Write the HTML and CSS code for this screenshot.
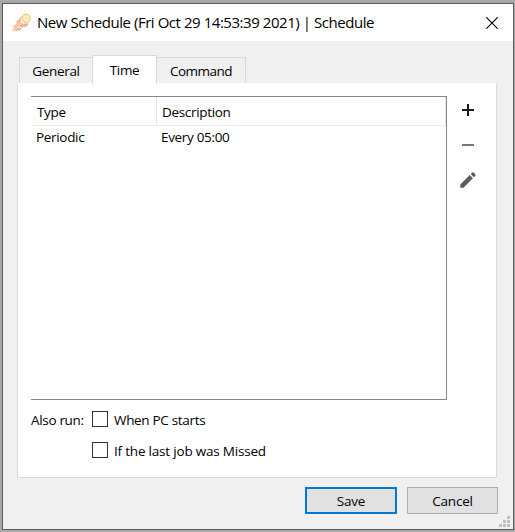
FILE: index.html
```
<!DOCTYPE html>
<html lang="en">
<head>
<meta charset="utf-8">
<title>New Schedule</title>
<link rel="stylesheet" href="styles.css">
</head>
<body>
<div class="window">
  <header class="titlebar">
    <svg class="logo" width="20" height="20" viewBox="0 0 20 20" fill="none">
      <g stroke="#ef9a8c" stroke-width="1.400">
        <path d="M10.500 3.500 4.500 9.500M9 7 1.500 14.500M9.500 9 .800 17.800" stroke="#f4b590"/>
        <path d="M11 10.500 3.500 18M13.500 10.500 6.500 17.500M16 10.500 12 14.500" stroke-dasharray="5 1"/>
      </g>
      <circle cx="14.200" cy="5.300" r="3.900" fill="#fff5d0" stroke="#f4d488" stroke-width="1.800"/>
      <circle cx="14.400" cy="5" r="1.200" fill="#f5dc90"/>
    </svg>
    <h1 class="title">New Schedule (Fri Oct 29 14:53:39 2021) | Schedule</h1>
    <svg class="close" width="12" height="12" viewBox="0 0 12 12"><path d="M.3.3 11.700 11.700M11.700.3.3 11.700" stroke="#000" stroke-width="1.100"/></svg>
  </header>
  <main class="content">
    <nav class="tabs">
      <div class="tab general"><span>General</span></div>
      <div class="tab active"><span>Time</span></div>
      <div class="tab command"><span>Command</span></div>
    </nav>
    <section class="panel">
      <div class="top">
        <div class="table">
          <div class="row head"><div class="type">Type</div><div class="desc">Description</div></div>
          <div class="row"><div class="type">Periodic</div><div class="desc every">Every 05:00</div></div>
        </div>
        <div class="tools">
          <svg width="16" height="16" viewBox="0 0 16 16"><path d="M2 8h12M8 2v12" stroke="#1a1a1a" stroke-width="2"/></svg>
          <svg width="16" height="16" viewBox="0 0 16 16"><path d="M2 8h12" stroke="#777" stroke-width="2"/></svg>
          <svg width="16" height="16" viewBox="0 0 16 16" fill="#5c5c5c"><path d="M.3 12.500 9.700 3.100l3.200 3.200-9.400 9.400H.3zM10.700 2.100l1.500-1.500q.7-.6 1.400 0l1.800 1.800q.6.700 0 1.400l-1.500 1.500z"/></svg>
        </div>
      </div>
      <div class="options">
        <span class="also">Also run:</span>
        <div class="checks">
          <label class="check"><i class="box"></i><span class="when">When PC starts</span></label>
          <label class="check"><i class="box"></i><span class="missed">If the last job was Missed</span></label>
        </div>
      </div>
    </section>
    <footer class="buttons">
      <button class="button save">Save</button>
      <button class="button cancel">Cancel</button>
    </footer>
  </main>
  <svg class="grip" width="11" height="11" viewBox="0 0 11 11" fill="#bfbfbf"><path d="M8 0h3v3H8zM4 4h3v3H4zM8 4h3v3H8zM0 8h3v3H0zM4 8h3v3H4zM8 8h3v3H8z"/></svg>
</div>
</body>
</html>
```
FILE: styles.css
```
* { box-sizing: border-box; }
body {
  margin: 0;
  width: 515px;
  height: 532px;
  padding: 3px 1px 2px 2px;
  background: #a8a8a8;
  color: #000;
  font: 13.5px/20px "Open Sans", "Noto Sans", sans-serif;
  letter-spacing: -.32px;
  white-space: nowrap;
  overflow: hidden;
}
.window {
  position: relative;
  width: 512px;
  height: 527px;
  border: 1px solid #5c5c5c;
  background: #f0f0f0;
}
.titlebar {
  display: flex;
  height: 37px;
  align-items: center;
  padding: 0 15px 0 9px;
  background: #fff;
}
.title {
  flex: 1;
  margin: -1px 0 0 5px;
  font-size: 15px;
  font-weight: 400;
  letter-spacing: -.45px;
}
.content { padding: 14px 16px 0 14px; }
.tabs {
  display: flex;
  align-items: flex-end;
  height: 28px;
  padding-left: 2px;
}
.tab {
  height: 26px;
  border: 1px solid #d9d9d9;
  border-bottom: 0;
  padding-top: 3px;
  text-align: center;
}
.general { width: 73px; border-right: 0; }
.command { width: 89px; border-left: 0; letter-spacing: -.5px; }
.active {
  width: 65px;
  height: 29px;
  margin-bottom: -1px;
  padding-top: 4px;
  background: #fff;
  z-index: 1;
}
.panel {
  height: 395px;
  border: 1px solid #dcdcdc;
  border-top-color: #fff;
  background: #fff;
  padding: 12px 20px 0 13px;
}
.top { display: flex; justify-content: space-between; }
.table {
  width: 416px;
  height: 304px;
  border: 1px solid #828790;
  border-left: 0;
}
.row { display: flex; height: 24px; line-height: 22px; padding-left: 5px; }
.head {
  height: 29px;
  margin: 0 0 0 1px;
  border-bottom: 1px solid #ededed;
  border-right: 1px solid #e5e5e5;
  line-height: 30px;
}
.type { width: 125px; }
.head .type { width: 120px; border-right: 1px solid #e5e5e5; }
.head .desc { padding-left: 5px; }
.tools {
  display: flex;
  flex-direction: column;
  gap: 19px;
  padding-top: 6px;
}
.options { display: flex; padding-top: 11px; line-height: 18px; }
.also { width: 61px; }
.checks { display: flex; flex-direction: column; gap: 11px; }
.check { display: flex; height: 20px; }
.missed { letter-spacing: -.2px; }
.box {
  width: 16px;
  height: 16px;
  margin-right: 6px;
  border: 1px solid #333;
  background: #fff;
}
.buttons { display: flex; justify-content: flex-end; gap: 10px; padding: 9px 0; margin-right: -1px; }
.button {
  width: 91px;
  height: 27px;
  padding: 0;
  border: 1px solid #adadad;
  background: #e1e1e1;
  color: #000;
  font: inherit;
  letter-spacing: -.2px;
}
.save { width: 92px; border: 2px solid #0078d7; }
.grip { position: absolute; right: 3px; bottom: 2px; }
```
